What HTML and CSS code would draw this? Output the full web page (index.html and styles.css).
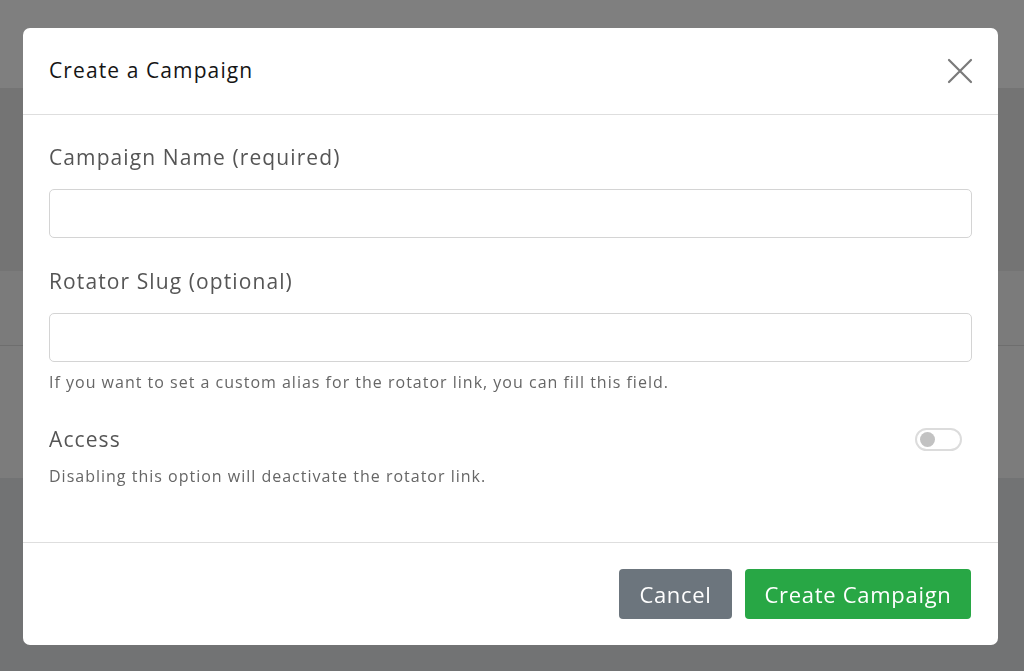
FILE: index.html
```html
<!DOCTYPE html>
<html lang="en">
<head>
    <meta charset="UTF-8">
    <meta name="viewport" content="width=device-width, initial-scale=1.0">
    <title>Create a Campaign</title>
    <link rel="stylesheet" href="styles.css">
</head>
<body>
    <!-- Page behind the overlay -->
    <div class="page">
        <div class="band band-top"></div>
        <div class="band band-dark"></div>
        <div class="band band-mid"></div>
        <div class="band band-light"></div>
        <div class="band band-bottom"></div>
    </div>

    <!-- Modal -->
    <div class="overlay">
        <div class="modal">
            <div class="modal-header">
                <h2 class="modal-title">Create a Campaign</h2>
                <button class="close-btn" aria-label="Close">
                    <svg width="26" height="26" viewBox="0 0 26 26">
                        <path d="M2 2 L24 24 M24 2 L2 24" stroke="#7a7a7a" stroke-width="2.2" stroke-linecap="round" fill="none"/>
                    </svg>
                </button>
            </div>

            <form class="modal-body">
                <div class="form-group">
                    <label for="campaignName">Campaign Name (required)</label>
                    <input type="text" id="campaignName">
                </div>

                <div class="form-group">
                    <label for="rotatorSlug">Rotator Slug (optional)</label>
                    <input type="text" id="rotatorSlug">
                    <p class="form-help">If you want to set a custom alias for the rotator link, you can fill this field.</p>
                </div>

                <div class="form-group access-group">
                    <div class="access-row">
                        <label>Access</label>
                        <span class="switch"><span class="knob"></span></span>
                    </div>
                    <p class="form-help">Disabling this option will deactivate the rotator link.</p>
                </div>
            </form>

            <div class="modal-footer">
                <button class="btn btn-cancel">Cancel</button>
                <button class="btn btn-create">Create Campaign</button>
            </div>
        </div>
    </div>
</body>
</html>
```
FILE: styles.css
```css
* {
    margin: 0;
    padding: 0;
    box-sizing: border-box;
    font-family: 'Open Sans', 'Noto Sans', sans-serif;
}

body {
    width: 1024px;
    height: 671px;
    overflow: hidden;
    background-color: #7d7d7d;
}

.page {
    display: flex;
    flex-direction: column;
    height: 671px;
}

.band-top { height: 88px; background-color: #7f7f7f; }
.band-dark { height: 183px; background-color: #747474; }
.band-mid { height: 75px; background-color: #7b7b7b; border-bottom: 1px solid #6e6e6e; }
.band-light { height: 132px; background-color: #7c7c7c; }
.band-bottom { flex: 1; background-color: #727374; }

.overlay {
    position: fixed;
    top: 0;
    left: 0;
    right: 0;
    bottom: 0;
    padding: 28px 26px 0 23px;
}

.modal {
    width: 975px;
    height: 617px;
    background-color: #fff;
    border-radius: 7px;
    display: flex;
    flex-direction: column;
}

.modal-header {
    height: 87px;
    display: flex;
    justify-content: space-between;
    align-items: center;
    padding: 0 25px 0 26px;
    border-bottom: 1px solid #dedede;
}

.modal-title {
    font-size: 21px;
    font-weight: 400;
    letter-spacing: 1.1px;
    color: #151515;
    margin-top: -3px;
}

.close-btn {
    background: none;
    border: none;
    display: flex;
    cursor: pointer;
}

.modal-body {
    flex: 1;
    padding: 27px 26px 0 26px;
}

.form-group label {
    display: block;
    font-size: 21px;
    letter-spacing: 1.1px;
    line-height: 30px;
    color: #555;
}

.form-group input {
    display: block;
    width: 100%;
    height: 49px;
    margin-top: 17px;
    padding: 0 14px;
    border: 1px solid #d4d4d4;
    border-radius: 5px;
    font-size: 18px;
    outline: none;
}

.form-group + .form-group {
    margin-top: 28px;
}

.form-help {
    margin-top: 9px;
    font-size: 16px;
    letter-spacing: 1px;
    line-height: 22px;
    color: #666;
}

.access-group {
    padding-top: 3px;
}

.access-row {
    display: flex;
    justify-content: space-between;
    align-items: center;
    padding-right: 10px;
}

.access-group .form-help {
    margin-top: 11px;
}

.switch {
    width: 47px;
    height: 23px;
    border: 2px solid #dcdcdc;
    border-radius: 12px;
    display: flex;
    align-items: center;
    padding-left: 3px;
}

.knob {
    width: 15px;
    height: 15px;
    border-radius: 50%;
    background-color: #c2c2c2;
}

.modal-footer {
    height: 103px;
    border-top: 1px solid #dedede;
    display: flex;
    justify-content: flex-end;
    align-items: center;
    gap: 13px;
    padding: 0 27px 0 26px;
}

.btn {
    height: 50px;
    padding: 0 10px;
    border: none;
    border-radius: 4px;
    color: #fff;
    font-size: 22px;
    letter-spacing: 0.7px;
    cursor: pointer;
}

.btn-cancel {
    width: 113px;
    background-color: #6c757d;
}

.btn-create {
    width: 226px;
    background-color: #28a745;
}
```
